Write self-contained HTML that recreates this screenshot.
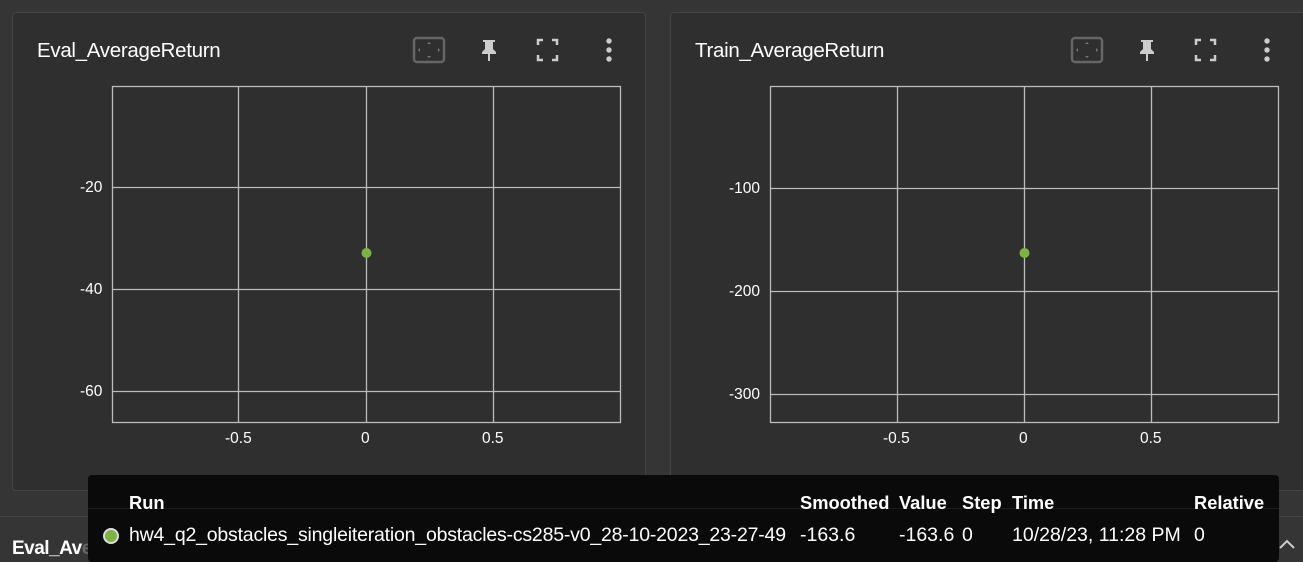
<!DOCTYPE html>
<html><head><meta charset="utf-8">
<style>
html,body{margin:0;padding:0;width:1303px;height:562px;overflow:hidden;background:#353535;font-family:"Liberation Sans",Arial,sans-serif;color:#fff}
.card{position:absolute;top:12px;height:479px;background:#2f2f2f;border:1px solid #444;border-radius:4px;box-sizing:border-box}
.t{position:absolute;font-size:20.5px;color:#fff;letter-spacing:-0.3px}
.l{position:absolute;font-size:15.5px;color:#fff}
.tip{position:absolute;left:88px;top:475px;width:1191px;height:87px;background:#0a0a0a;border-radius:4px}
.h{position:absolute;top:17px;font-weight:bold;font-size:18.3px}
.r{position:absolute;top:49px;font-size:19.5px}
</style></head><body>
<div class="card" style="left:12px;width:634px"></div>
<div class="card" style="left:670px;width:650px"></div>
<div style="position:absolute;left:0;top:516px;width:1303px;height:1px;background:#444"></div>
<div style="position:absolute;left:12px;top:538px;font-size:19px;font-weight:bold;color:#fff;letter-spacing:-0.5px">Eval_Av<span style="color:#666">erageEpLen</span></div>
<svg style="position:absolute;left:1278px;top:537px" width="18" height="14"><path d="M2 11 L9 4 L16 11" stroke="#ccc" stroke-width="2" fill="none"/></svg>

<div class="t" style="left:37px;top:39px">Eval_AverageReturn</div>
<div class="t" style="left:695px;top:39px">Train_AverageReturn</div>

<svg width="1303" height="562" style="position:absolute;left:0;top:0">
<g fill="none" stroke="#bbb" stroke-width="1.3">
<rect x="112.5" y="86.5" width="508" height="336"/>
<path d="M238.5 86V422M366.5 86V422M493.5 86V422M112 187.5H620M112 289.5H620M112 391.5H620"/>
<rect x="770.5" y="86.5" width="508" height="336"/>
<path d="M897.5 86V422M1024.5 86V422M1151.5 86V422M770 188.5H1278M770 291.5H1278M770 394.5H1278"/>
</g>
<circle cx="366.5" cy="253" r="5" fill="#7cb342"/>
<circle cx="1024.5" cy="253" r="5" fill="#7cb342"/>
<g id="ic">
<rect x="414" y="38" width="30" height="24" rx="3" fill="none" stroke="#666" stroke-width="2.5"/>
<path d="M429 42l-2 2h4zM429 58l-2-2h4zM418 50l2-2v4zM440 50l-2-2v4z" fill="#777"/>
<path d="M483 40h12v2h-2v7l3 3v2h-6v7h-2v-7h-6v-2l3-3v-7h-2z" fill="#ccc"/>
<path d="M538 45v-5h5M552 40h5v5M557 55v5h-5M543 60h-5v-5" fill="none" stroke="#ccc" stroke-width="2.5"/>
<circle cx="609" cy="41" r="2.7" fill="#ccc"/><circle cx="609" cy="50" r="2.7" fill="#ccc"/><circle cx="609" cy="59" r="2.7" fill="#ccc"/>
</g>
<use href="#ic" x="658"/>
</svg>

<div class="l" style="left:80px;top:179px">-20</div>
<div class="l" style="left:80px;top:281px">-40</div>
<div class="l" style="left:80px;top:383px">-60</div>
<div class="l" style="left:225px;top:430px">-0.5</div>
<div class="l" style="left:361px;top:430px">0</div>
<div class="l" style="left:482px;top:430px">0.5</div>
<div class="l" style="left:729px;top:180px">-100</div>
<div class="l" style="left:729px;top:283px">-200</div>
<div class="l" style="left:729px;top:386px">-300</div>
<div class="l" style="left:883px;top:430px">-0.5</div>
<div class="l" style="left:1019px;top:430px">0</div>
<div class="l" style="left:1140px;top:430px">0.5</div>

<div class="tip">
<div style="position:absolute;left:0;top:33px;width:1191px;height:1px;background:#1c1c1c"></div>
<div class="h" style="left:41px">Run</div>
<div class="h" style="left:712px">Smoothed</div>
<div class="h" style="left:811px">Value</div>
<div class="h" style="left:874px">Step</div>
<div class="h" style="left:924px">Time</div>
<div class="h" style="left:1106px">Relative</div>
<div style="position:absolute;left:15px;top:53px;width:12px;height:12px;border-radius:50%;background:#7cb342;border:2px solid #ddd"></div>
<div class="r" style="left:41px;letter-spacing:-0.2px">hw4_q2_obstacles_singleiteration_obstacles-cs285-v0_28-10-2023_23-27-49</div>
<div class="r" style="left:712px">-163.6</div>
<div class="r" style="left:811px">-163.6</div>
<div class="r" style="left:874px">0</div>
<div class="r" style="left:924px">10/28/23, 11:28 PM</div>
<div class="r" style="left:1106px">0</div>
</div>
</body></html>
